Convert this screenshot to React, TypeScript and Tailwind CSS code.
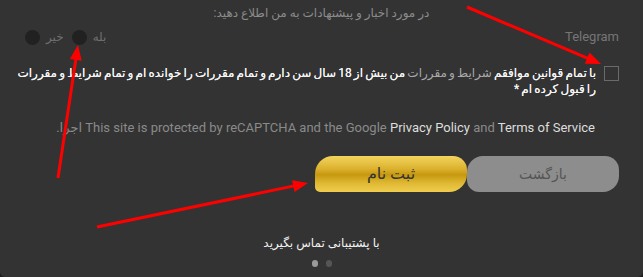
import React from 'react';

type Pt = [number, number];

// red annotation arrows drawn over the form
const arrows: [Pt, Pt][] = [
  [[467, 7], [601, 64]],
  [[58, 178], [78, 45]],
  [[97, 227], [308, 183]],
];

function arrowShape(from: Pt, to: Pt, head = 15, half = 6) {
  const [x1, y1] = from;
  const [x2, y2] = to;
  const len = Math.hypot(x2 - x1, y2 - y1);
  const ux = (x2 - x1) / len;
  const uy = (y2 - y1) / len;
  const bx = x2 - ux * head;
  const by = y2 - uy * head;
  const points = `${x2},${y2} ${bx - uy * half},${by + ux * half} ${bx + uy * half},${by - ux * half}`;
  return { x1, y1, x2: bx + ux * 2, y2: by + uy * 2, points };
}

function Radio({ label }: { label: string }) {
  return (
    <label className="flex items-center gap-[6px]">
      <span className="text-[12px] text-[#6f6f6f]">{label}</span>
      <span className="w-[15px] h-[15px] rounded-full bg-[#212121]" />
    </label>
  );
}

export default function App() {
  return (
    <div className="w-[643px] h-[277px] bg-[#1c1c1c]">
      <div
        dir="rtl"
        className="relative w-full h-full bg-[#333333] rounded-b-[5px] px-[24px] flex flex-col font-['Roboto','DejaVu_Sans',sans-serif]"
      >
        <p className="mt-[4px] text-center text-[12px] leading-[18px] text-[#8b8b8b]">
          در مورد اخبار و پیشنهادات به من اطلاع دهید:
        </p>

        <div className="mt-[6px] flex justify-between items-center h-[18px]">
          <span dir="ltr" className="text-[13px] text-[#767676]">Telegram</span>
          <div className="flex items-center gap-[8px] ml-[1px]">
            <Radio label="بله" />
            <Radio label="خیر" />
          </div>
        </div>

        <div className="mt-[19px] flex items-start gap-[8px]">
          <span className="mt-[1px] shrink-0 w-[15px] h-[15px] border border-[#6a6a6a]" />
          <p className="text-[12px] leading-[16px] text-[#f4f4f4] whitespace-nowrap [word-spacing:-0.8px] [text-shadow:0_0_0.4px_#f4f4f4]">
            با تمام قوانین موافقم{' '}
            <span className="text-[#a9a9a9] [text-shadow:none]">شرایط و مقررات</span>{' '}
            من بیش از 18 سال سن دارم و تمام مقررات را خوانده ام و تمام شرایط و مقررات
            <br />
            را قبول کرده ام *
          </p>
        </div>

        <p className="mt-[22px] pr-[24px] text-[13px] leading-[18px] text-[#8a8a8a] whitespace-nowrap">
          This site is protected by reCAPTCHA and the Google{' '}
          <span className="text-[#dddddd]">Privacy Policy</span> and{' '}
          <span className="text-[#dddddd]">Terms of Service</span> اجرا.
        </p>

        <div className="mt-[19px] flex">
          <button className="w-[152px] h-[36px] bg-[#8d8d8d] text-[#555555] text-[14px] rounded-tl-[16px] rounded-tr-[14px] rounded-br-[16px] rounded-bl-[12px]">
            بازگشت
          </button>
          <button className="w-[152px] h-[36px] bg-[linear-gradient(to_bottom,#f3d55e_0%,#dcb22f_35%,#c6980f_52%,#dfb833_75%,#f0cd4e_100%)] text-[#333333] text-[16px] rounded-tl-[18px] rounded-tr-[14px] rounded-br-[18px] rounded-bl-[5px]">
            ثبت نام
          </button>
        </div>

        <p className="mt-[42px] text-center text-[12px] leading-[18px] text-[#f2f2f2]">
          با پشتیبانی تماس بگیرید
        </p>

        <div className="mt-[8px] flex justify-center gap-[8px]" dir="ltr">
          <span className="w-[6px] h-[7px] rounded-full bg-[#9a9a9a]" />
          <span className="w-[6px] h-[7px] rounded-full bg-[#555555]" />
        </div>

        <svg className="absolute inset-0 pointer-events-none" width="643" height="277">
          {arrows.map(([from, to], i) => {
            const a = arrowShape(from, to);
            return (
              <g key={i} fill="#ff0000" stroke="#ff0000">
                <line x1={a.x1} y1={a.y1} x2={a.x2} y2={a.y2} strokeWidth={3} />
                <polygon points={a.points} strokeWidth={0} />
              </g>
            );
          })}
        </svg>
      </div>
    </div>
  );
}
